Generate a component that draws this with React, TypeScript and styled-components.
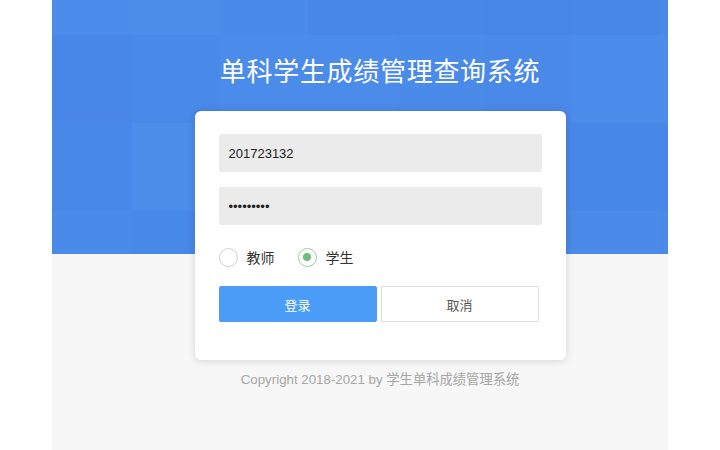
import React from 'react';
import styled, { createGlobalStyle } from 'styled-components';

const GlobalStyle = createGlobalStyle`
  html, body {
    margin: 0;
    padding: 0;
    background: #ffffff;
  }
  body {
    font-family: "Liberation Sans", "Noto Sans CJK SC", sans-serif;
  }
`;

// subtle square tiles of the header picture: [col, row, colour]
const TILE = 88;
const HERO_H = 254;
const tiles: [number, number, string][] = [
  [0, 0, '#4b8be9'], [1, 0, '#4c8dea'], [2, 0, '#4a8ae8'], [3, 0, '#4887e7'],
  [4, 0, '#4887e7'], [5, 0, '#4786e6'], [6, 0, '#4887e7'], [7, 0, '#4a89e8'],
  [0, 1, '#4887e7'], [1, 1, '#4989e8'], [2, 1, '#4b8be9'], [3, 1, '#4b8be9'],
  [4, 1, '#4a8ae9'], [5, 1, '#4a89e8'], [6, 1, '#4b8cea'], [7, 1, '#4b8cea'],
  [0, 2, '#4888e8'], [1, 2, '#4c8de9'], [2, 2, '#4a8ae8'], [3, 2, '#4989e8'],
  [4, 2, '#4a89e8'], [5, 2, '#4888e7'], [6, 2, '#4787e7'], [7, 2, '#4787e7'],
  [0, 3, '#4a8ae9'], [1, 3, '#4888e7'], [2, 3, '#4a89e8'], [3, 3, '#4b8be9'],
  [4, 3, '#4989e8'], [5, 3, '#4a89e8'], [6, 3, '#4b8ae9'], [7, 3, '#4a89e8'],
];

const tileLayers = tiles
  .map(([c, r, col]) => {
    const x = -8 + c * TILE;
    const y = -53 + r * TILE;
    const h = Math.min(TILE, HERO_H - y);
    return `linear-gradient(${col}, ${col}) ${x}px ${y}px / ${TILE}px ${h}px no-repeat`;
  })
  .join(', ');

const Page = styled.div<{ $tiles: string }>`
  width: 616px;
  height: 450px;
  margin: 0 auto;
  padding: 54px 0 0 40px;
  box-sizing: border-box;
  display: flex;
  flex-direction: column;
  align-items: center;
  background: ${({ $tiles }) => $tiles},
    linear-gradient(#4a89e8, #4a89e8) 0 0 / 100% ${HERO_H}px no-repeat,
    #f7f7f7;
`;

const Title = styled.h1`
  margin: 0;
  font-size: 26px;
  line-height: 36px;
  font-weight: 400;
  color: #ffffff;
  letter-spacing: 0.7px;
`;

const Card = styled.form`
  width: 371px;
  margin-top: 21px;
  padding: 23px 24px 38px;
  box-sizing: border-box;
  background: #ffffff;
  border-radius: 6px;
  box-shadow: 0 1px 8px rgba(0, 0, 0, 0.14);
  display: flex;
  flex-direction: column;
`;

const Field = styled.input`
  height: 38px;
  width: 100%;
  margin: 0;
  padding: 0 10px;
  box-sizing: border-box;
  border: none;
  outline: none;
  border-radius: 2px;
  background: #ebebeb;
  font-family: "Liberation Sans", sans-serif;
  font-size: 13px;
  color: #222;
  & + & {
    margin-top: 15px;
  }
`;

const RadioRow = styled.div`
  display: flex;
  align-items: center;
  gap: 23px;
  height: 20px;
  margin-top: 22px;
`;

const RadioLabel = styled.label`
  display: flex;
  align-items: center;
  gap: 9px;
  font-size: 14px;
  color: #333;
  cursor: pointer;
`;

const RadioDot = styled.span<{ $checked?: boolean }>`
  width: 19px;
  height: 19px;
  box-sizing: border-box;
  border-radius: 50%;
  border: 1.5px solid ${({ $checked }) => ($checked ? '#8fd29a' : '#cfcfcf')};
  display: flex;
  align-items: center;
  justify-content: center;
  &::after {
    content: '';
    width: 8px;
    height: 8px;
    border-radius: 50%;
    background: ${({ $checked }) => ($checked ? '#6cbf78' : 'transparent')};
  }
`;

const Buttons = styled.div`
  display: flex;
  gap: 4px;
  margin-top: 19px;
`;

const Button = styled.button<{ $primary?: boolean }>`
  width: 158px;
  height: 36px;
  margin: 0;
  padding: 0;
  box-sizing: border-box;
  border-radius: 2px;
  border: 1px solid ${({ $primary }) => ($primary ? '#4b9cf6' : '#dcdcdc')};
  background: ${({ $primary }) => ($primary ? '#4b9cf6' : '#ffffff')};
  color: ${({ $primary }) => ($primary ? '#ffffff' : '#555555')};
  font-family: "Liberation Sans", "Noto Sans CJK SC", sans-serif;
  font-size: 13px;
  cursor: pointer;
`;

const Copyright = styled.p`
  margin: 10px 0 0;
  font-size: 13.3px;
  line-height: 20px;
  color: #a6a6a6;
`;

const Radio = ({ label, checked }: { label: string; checked?: boolean }) => (
  <RadioLabel>
    <RadioDot $checked={checked} />
    {label}
  </RadioLabel>
);

export default function App() {
  return (
    <>
      <GlobalStyle />
      <Page $tiles={tileLayers}>
        <Title>单科学生成绩管理查询系统</Title>
        <Card onSubmit={(e) => e.preventDefault()}>
          <Field type="text" defaultValue="201723132" />
          <Field type="password" defaultValue="123456789" />
          <RadioRow>
            <Radio label="教师" />
            <Radio label="学生" checked />
          </RadioRow>
          <Buttons>
            <Button type="submit" $primary>登录</Button>
            <Button type="button">取消</Button>
          </Buttons>
        </Card>
        <Copyright>Copyright 2018-2021 by 学生单科成绩管理系统</Copyright>
      </Page>
    </>
  );
}
